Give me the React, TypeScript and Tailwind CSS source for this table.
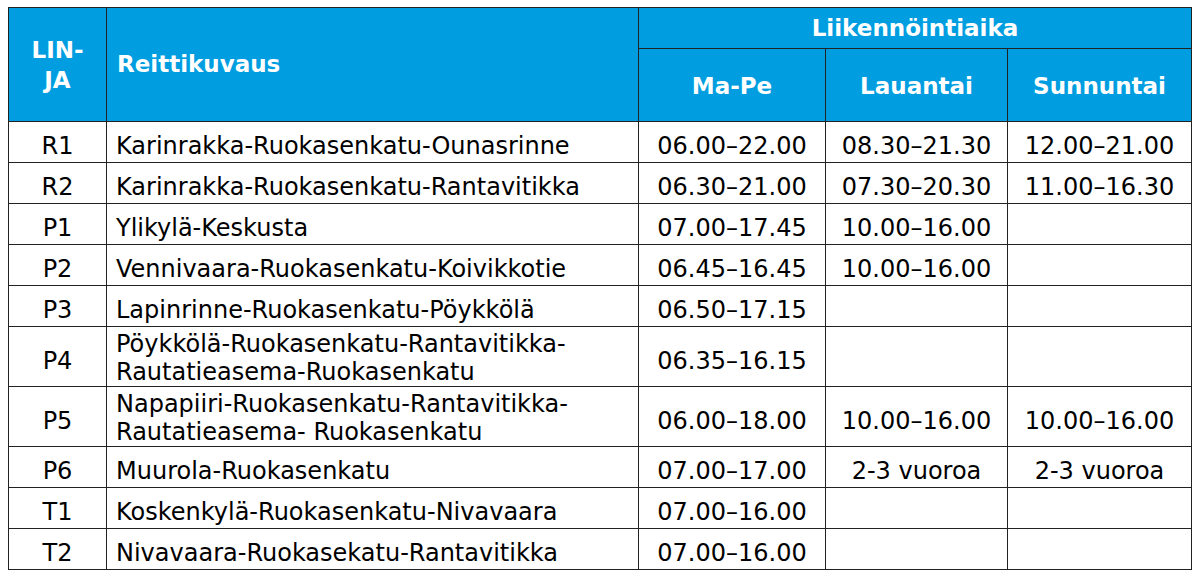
const rows = [
  { id: "R1", route: ["Karinrakka-Ruokasenkatu-Ounasrinne"], mape: "06.00–22.00", la: "08.30–21.30", su: "12.00–21.00" },
  { id: "R2", route: ["Karinrakka-Ruokasenkatu-Rantavitikka"], mape: "06.30–21.00", la: "07.30–20.30", su: "11.00–16.30" },
  { id: "P1", route: ["Ylikylä-Keskusta"], mape: "07.00–17.45", la: "10.00–16.00", su: "" },
  { id: "P2", route: ["Vennivaara-Ruokasenkatu-Koivikkotie"], mape: "06.45–16.45", la: "10.00–16.00", su: "" },
  { id: "P3", route: ["Lapinrinne-Ruokasenkatu-Pöykkölä"], mape: "06.50–17.15", la: "", su: "" },
  { id: "P4", route: ["Pöykkölä-Ruokasenkatu-Rantavitikka-", "Rautatieasema-Ruokasenkatu"], mape: "06.35–16.15", la: "", su: "" },
  { id: "P5", route: ["Napapiiri-Ruokasenkatu-Rantavitikka-", "Rautatieasema- Ruokasenkatu"], mape: "06.00–18.00", la: "10.00–16.00", su: "10.00–16.00" },
  { id: "P6", route: ["Muurola-Ruokasenkatu"], mape: "07.00–17.00", la: "2-3 vuoroa", su: "2-3 vuoroa" },
  { id: "T1", route: ["Koskenkylä-Ruokasenkatu-Nivavaara"], mape: "07.00–16.00", la: "", su: "" },
  { id: "T2", route: ["Nivavaara-Ruokasekatu-Rantavitikka"], mape: "07.00–16.00", la: "", su: "" },
];

export default function App() {
  return (
    <div className="min-h-screen bg-white pl-[8px] pt-[7px] font-['DejaVu_Sans',Verdana,sans-serif]">
      <table className="table-fixed border-collapse w-[1183px] text-black">
        <colgroup>
          <col className="w-[98px]" />
          <col className="w-[532px]" />
          <col className="w-[187px]" />
          <col className="w-[182px]" />
          <col className="w-[184px]" />
        </colgroup>
        <thead className="bg-[#009ee0] text-white font-bold text-[23px]">
          <tr className="h-[41px]">
            <th rowSpan={2} className="border border-[#222] text-center leading-[30px] font-bold">
              LIN-
              <br />
              JA
            </th>
            <th rowSpan={2} className="border border-[#222] text-left px-[10px] font-bold">
              Reittikuvaus
            </th>
            <th colSpan={3} className="border border-[#222] text-center font-bold">
              Liikennöintiaika
            </th>
          </tr>
          <tr className="h-[73px]">
            <th className="border border-[#222] text-center font-bold pt-[3px]">Ma-Pe</th>
            <th className="border border-[#222] text-center font-bold pt-[3px]">Lauantai</th>
            <th className="border border-[#222] text-center font-bold pt-[3px]">Sunnuntai</th>
          </tr>
        </thead>
        <tbody className="text-[24px] leading-[28px]">
          {rows.map((r) => {
            const double = r.route.length > 1;
            return (
              <tr key={r.id} className={double ? "h-[60px]" : "h-[41px]"}>
                <td className="border border-[#222] text-center p-0 pt-[8px]">{r.id}</td>
                <td className={`border border-[#222] pl-[9px] pr-[10px] py-0 ${double ? "pt-[2px]" : "pt-[7px]"}`}>
                  {r.route.map((line, i) => (
                    <div key={i} className="whitespace-nowrap">
                      {line}
                    </div>
                  ))}
                </td>
                <td className="border border-[#222] text-center p-0 pt-[8px] whitespace-nowrap">{r.mape}</td>
                <td className="border border-[#222] text-center p-0 pt-[8px] whitespace-nowrap">{r.la}</td>
                <td className="border border-[#222] text-center p-0 pt-[8px] whitespace-nowrap">{r.su}</td>
              </tr>
            );
          })}
        </tbody>
      </table>
    </div>
  );
}
